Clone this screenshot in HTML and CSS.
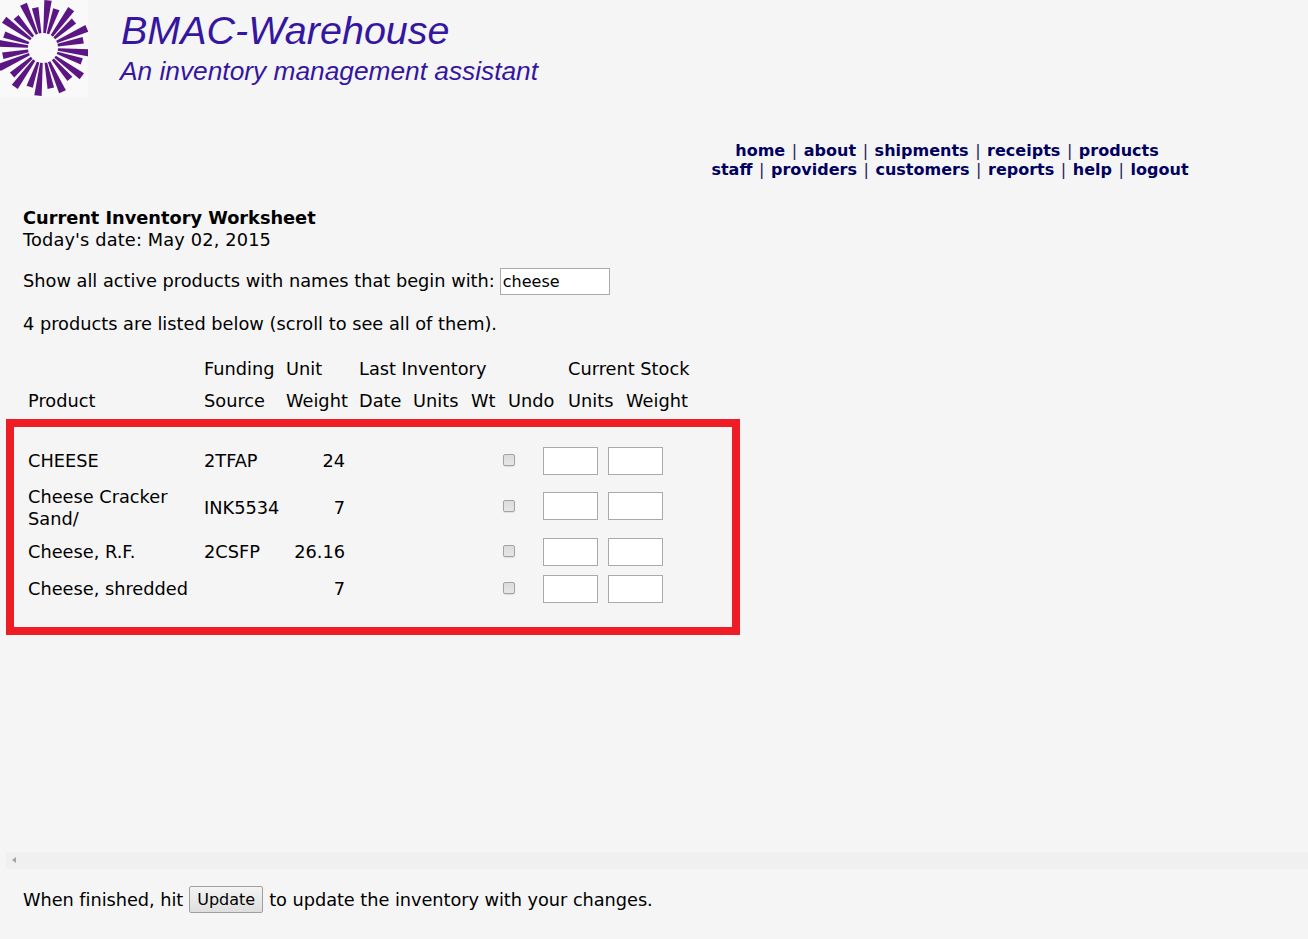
FILE: index.html
```html
<!DOCTYPE html>
<html lang="en">
<head>
<meta charset="utf-8">
<title>BMAC-Warehouse</title>
<link rel="stylesheet" href="styles.css">
</head>
<body>
<header class="banner">
  <div class="logo">
    <svg width="88" height="98" viewBox="0 0 88 98" aria-hidden="true">
      <defs>
        <filter id="soft" x="-5%" y="-5%" width="110%" height="110%"><feGaussianBlur stdDeviation="0.4"/></filter>
        <polygon id="sl" points="-1.3,-15 1.3,-15 3.7,-48 -3.7,-48"/>
        <polygon id="ss" points="-1.3,-15 1.3,-15 3.3,-41 -3.3,-41"/>
      </defs>
      <g class="spokes" filter="url(#soft)" transform="translate(43 48)">
        <use href="#sl" transform="rotate(-24)"/>
        <use href="#ss" transform="rotate(-11)"/>
        <use href="#sl" transform="rotate(6)"/>
        <use href="#ss" transform="rotate(19)"/>
        <use href="#sl" transform="rotate(36)"/>
        <use href="#ss" transform="rotate(49)"/>
        <use href="#sl" transform="rotate(66)"/>
        <use href="#ss" transform="rotate(79)"/>
        <use href="#sl" transform="rotate(96)"/>
        <use href="#ss" transform="rotate(109)"/>
        <use href="#sl" transform="rotate(126)"/>
        <use href="#ss" transform="rotate(139)"/>
        <use href="#sl" transform="rotate(156)"/>
        <use href="#ss" transform="rotate(169)"/>
        <use href="#sl" transform="rotate(186)"/>
        <use href="#ss" transform="rotate(199)"/>
        <use href="#sl" transform="rotate(216)"/>
        <use href="#ss" transform="rotate(229)"/>
        <use href="#sl" transform="rotate(246)"/>
        <use href="#ss" transform="rotate(259)"/>
        <use href="#sl" transform="rotate(276)"/>
        <use href="#ss" transform="rotate(289)"/>
        <use href="#sl" transform="rotate(306)"/>
        <use href="#ss" transform="rotate(319)"/>
      </g>
    </svg>
  </div>
  <div class="brand">
    <div class="brand-name">BMAC-Warehouse</div>
    <div class="brand-tag">An inventory management assistant</div>
  </div>
</header>

<nav class="nav">
  <div class="nav-line"><a href="#">home</a> | <a href="#">about</a> | <a href="#">shipments</a> | <a href="#">receipts</a> | <a href="#">products</a></div>
  <div class="nav-line nav-line-2"><a href="#">staff</a> | <a href="#">providers</a> | <a href="#">customers</a> | <a href="#">reports</a> | <a href="#">help</a> | <a href="#">logout</a></div>
</nav>

<main>
  <section class="intro">
    <h1 class="title">Current Inventory Worksheet</h1>
    <p class="line date">Today's date: May 02, 2015</p>
    <div class="filter">
      <label for="prefix">Show all active products with names that begin with:</label>
      <input id="prefix" class="field field-prefix" type="text" value="cheese">
    </div>
    <p class="line count">4 products are listed below (scroll to see all of them).</p>
  </section>

  <section class="scroller">
    <table class="grid head">
      <colgroup>
        <col class="h1"><col class="h2"><col class="h3"><col class="h4"><col class="h5"><col class="h6"><col class="h7"><col class="h8"><col class="h9">
      </colgroup>
      <tr>
        <th></th><th>Funding</th><th>Unit</th><th colspan="4">Last Inventory</th><th colspan="2">Current Stock</th>
      </tr>
      <tr>
        <th>Product</th><th>Source</th><th>Weight</th><th>Date</th><th>Units</th><th>Wt</th><th>Undo</th><th>Units</th><th>Weight</th>
      </tr>
    </table>

    <div class="box">
      <table class="grid body">
        <colgroup>
          <col class="b1"><col class="b2"><col class="b3"><col class="b4"><col class="b5"><col class="b6"><col class="b7">
        </colgroup>
        <tr>
          <td>CHEESE</td><td>2TFAP</td><td class="num">24</td><td></td>
          <td class="ctl"><input class="chk" type="checkbox"></td>
          <td class="ctl"><input class="field field-cell" type="text"></td>
          <td class="ctl"><input class="field field-cell" type="text"></td>
        </tr>
        <tr class="tall">
          <td>Cheese Cracker Sand/</td><td>INK5534</td><td class="num">7</td><td></td>
          <td class="ctl chk-cell"><input class="chk" type="checkbox"></td>
          <td class="ctl"><input class="field field-cell" type="text"></td>
          <td class="ctl"><input class="field field-cell" type="text"></td>
        </tr>
        <tr>
          <td>Cheese, R.F.</td><td>2CSFP</td><td class="num">26.16</td><td></td>
          <td class="ctl"><input class="chk" type="checkbox"></td>
          <td class="ctl"><input class="field field-cell" type="text"></td>
          <td class="ctl"><input class="field field-cell" type="text"></td>
        </tr>
        <tr>
          <td>Cheese, shredded</td><td></td><td class="num">7</td><td></td>
          <td class="ctl"><input class="chk" type="checkbox"></td>
          <td class="ctl"><input class="field field-cell" type="text"></td>
          <td class="ctl"><input class="field field-cell" type="text"></td>
        </tr>
      </table>
    </div>

    <div class="hbar"><span class="hbar-arrow"></span></div>
  </section>

  <div class="finish">
    <span>When finished, hit</span>
    <button class="btn" type="button">Update</button>
    <span>to update the inventory with your changes.</span>
  </div>
</main>
</body>
</html>
```

FILE: styles.css
```css
* { box-sizing: border-box; }

html, body { margin: 0; padding: 0; }

body {
  background: #f5f5f5;
  color: #000;
  font-family: "DejaVu Sans", Verdana, sans-serif;
  font-size: 17.75px;
  line-height: 22px;
  height: 939px;
  overflow: hidden;
}

.banner {
  display: flex;
  width: 560px;
  height: 98px;
}

.logo {
  width: 88px;
  height: 98px;
  background: #f9f9f9;
}

.logo svg { display: block; }

.spokes { fill: #5b1883; }

.brand {
  padding: 8px 0 0 31px;
  color: #3516a0;
  font-family: "Liberation Sans", Arial, sans-serif;
  font-style: italic;
}

.brand-name {
  font-size: 39.5px;
  line-height: 44px;
  margin-left: 2px;
}

.brand-tag {
  font-size: 26.3px;
  line-height: 32px;
  margin: 3px 0 0 1px;
}

.nav {
  margin: 43px 0 0 711px;
  width: 478px;
  font-size: 16px;
  line-height: 19px;
  text-align: center;
  color: #1a1a60;
  word-spacing: 1.5px;
}

.nav-line { margin-left: -6px; }
.nav-line-2 { margin-left: 0; }

.nav a {
  color: #00005f;
  font-weight: 700;
  text-decoration: none;
}

.intro { padding: 28px 0 0 23px; }

.title {
  margin: 0;
  font-size: 17.75px;
  line-height: 22px;
  font-weight: 700;
}

.line { margin: 0; }

.date { letter-spacing: 0.15px; }

.filter {
  display: flex;
  align-items: flex-start;
  gap: 5px;
  height: 27px;
  margin-top: 17px;
}

.filter label { padding-top: 2px; }

.count { margin-top: 18px; }

.field {
  display: block;
  background: #fff;
  border: 1px solid #aaa;
  border-radius: 0;
  font-family: "DejaVu Sans", Verdana, sans-serif;
  font-size: 16px;
  color: #000;
  padding: 0 2px;
  outline: none;
}

.field-prefix { width: 110px; height: 27px; }
.field-cell { width: 55px; height: 28px; }

.scroller { margin: 18px 0 0 6px; }

.grid {
  border-collapse: collapse;
  table-layout: fixed;
}

.grid th, .grid td {
  padding: 0;
  font-weight: 400;
  text-align: left;
}

.head { margin-left: 22px; width: 678px; }
.head th { height: 32px; }

.h1 { width: 176px; }
.h2 { width: 82px; }
.h3 { width: 73px; }
.h4 { width: 54px; }
.h5 { width: 58px; }
.h6 { width: 37px; }
.h7 { width: 60px; }
.h8 { width: 58px; }
.h9 { width: 80px; }

.box {
  width: 734px;
  height: 216px;
  margin-top: 2px;
  padding: 15px 0 0 14px;
  border: 8px solid #ee1c25;
}

.body { width: 635px; }
.body td { height: 37px; vertical-align: middle; }
.body .tall td { height: 54px; padding-top: 4px; }
.body .tall .ctl { padding-top: 0; }
.body .tall .chk-cell { padding-top: 2px; }
.grid .num { text-align: right; }

.b1 { width: 176px; }
.b2 { width: 82px; }
.b3 { width: 59px; }
.b4 { width: 158px; }
.b5 { width: 40px; }
.b6 { width: 65px; }
.b7 { width: 55px; }

.chk {
  appearance: none;
  display: block;
  width: 12px;
  height: 12px;
  margin: 0 0 2px;
  border: 1px solid #a3a3a3;
  border-radius: 2px;
  background: linear-gradient(#dcdcdc, #e6e6e6);
  box-shadow: 0 1px 1px #ddd;
}

.hbar {
  position: relative;
  height: 17px;
  margin-top: 217px;
  background: #f0f0f0;
}

.hbar-arrow {
  position: absolute;
  left: 6px;
  top: 5px;
  width: 0;
  height: 0;
  border-style: solid;
  border-width: 3.5px 4px 3.5px 0;
  border-color: transparent #a3a3a3 transparent transparent;
}

.finish {
  display: flex;
  align-items: center;
  gap: 6px;
  height: 27px;
  margin: 17px 0 0 23px;
  letter-spacing: -0.05px;
}

.btn {
  width: 74px;
  height: 27px;
  padding: 0;
  border: 1px solid #a0a0a0;
  border-radius: 2px;
  background: linear-gradient(#f4f4f4, #dedede);
  color: #000;
  font-family: "DejaVu Sans", Verdana, sans-serif;
  font-size: 16px;
  letter-spacing: 0;
}
```
